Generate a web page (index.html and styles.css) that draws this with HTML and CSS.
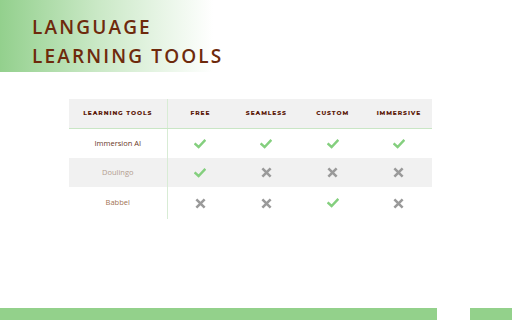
FILE: index.html
```html
<!DOCTYPE html>
<html>
<head>
<meta charset="utf-8">
<link rel="stylesheet" href="styles.css">
</head>
<body>
<div class="slide">
  <header class="title-box">
    <h1 class="title">LANGUAGE<br>LEARNING TOOLS</h1>
  </header>
  <main class="content">
    <table class="grid">
      <thead>
        <tr>
          <th class="first">LEARNING TOOLS</th>
          <th>FREE</th>
          <th>SEAMLESS</th>
          <th>CUSTOM</th>
          <th>IMMERSIVE</th>
        </tr>
      </thead>
      <tbody>
        <tr>
          <td class="first name-a">Immersion AI</td>
          <td><svg class="ok" viewBox="0 0 12 10"><path d="M1.5 5.2 L4.6 8 L10.5 1.8"/></svg></td>
          <td><svg class="ok" viewBox="0 0 12 10"><path d="M1.5 5.2 L4.6 8 L10.5 1.8"/></svg></td>
          <td><svg class="ok" viewBox="0 0 12 10"><path d="M1.5 5.2 L4.6 8 L10.5 1.8"/></svg></td>
          <td><svg class="ok" viewBox="0 0 12 10"><path d="M1.5 5.2 L4.6 8 L10.5 1.8"/></svg></td>
        </tr>
        <tr class="alt">
          <td class="first name-b">Doulingo</td>
          <td><svg class="ok" viewBox="0 0 12 10"><path d="M1.5 5.2 L4.6 8 L10.5 1.8"/></svg></td>
          <td><svg class="no" viewBox="0 0 12 12"><path d="M1.5 1.5 L10.5 10.5 M10.5 1.5 L1.5 10.5"/></svg></td>
          <td><svg class="no" viewBox="0 0 12 12"><path d="M1.5 1.5 L10.5 10.5 M10.5 1.5 L1.5 10.5"/></svg></td>
          <td><svg class="no" viewBox="0 0 12 12"><path d="M1.5 1.5 L10.5 10.5 M10.5 1.5 L1.5 10.5"/></svg></td>
        </tr>
        <tr>
          <td class="first name-c">Babbel</td>
          <td><svg class="no" viewBox="0 0 12 12"><path d="M1.5 1.5 L10.5 10.5 M10.5 1.5 L1.5 10.5"/></svg></td>
          <td><svg class="no" viewBox="0 0 12 12"><path d="M1.5 1.5 L10.5 10.5 M10.5 1.5 L1.5 10.5"/></svg></td>
          <td><svg class="ok" viewBox="0 0 12 10"><path d="M1.5 5.2 L4.6 8 L10.5 1.8"/></svg></td>
          <td><svg class="no" viewBox="0 0 12 12"><path d="M1.5 1.5 L10.5 10.5 M10.5 1.5 L1.5 10.5"/></svg></td>
        </tr>
      </tbody>
    </table>
  </main>
  <footer class="bottom">
    <div class="bar-long"></div>
    <div class="bar-gap"></div>
    <div class="bar-short"></div>
  </footer>
</div>
</body>
</html>
```
FILE: styles.css
```css
* { box-sizing: border-box; }
html, body { margin: 0; padding: 0; background: #fff; }
.slide {
  width: 512px;
  height: 320px;
  display: flex;
  flex-direction: column;
  overflow: hidden;
  font-family: "Open Sans", "Liberation Sans", sans-serif;
}
.title-box {
  width: 213px;
  height: 72px;
  background: linear-gradient(to right, #93d08d 0%, #c9e8c5 45%, #ffffff 100%);
  padding: 13px 0 0 32px;
}
.title {
  margin: 0;
  font-family: "Open Sans", "Liberation Sans", sans-serif;
  font-weight: 600;
  font-size: 19px;
  line-height: 29px;
  letter-spacing: 2.15px;
  color: #6e2a0c;
  white-space: nowrap;
}
.content {
  flex: 1;
  padding: 27px 0 0 69px;
}
.grid {
  border-collapse: collapse;
  width: 363px;
  table-layout: fixed;
}
.grid th {
  height: 29px;
  background: #f1f1f1;
  border-bottom: 1px solid #c9e6c5;
  font-family: "Montserrat", "Open Sans", "Liberation Sans", sans-serif;
  font-weight: 800;
  font-size: 6px;
  letter-spacing: 0.9px;
  color: #5c1a0a;
  text-align: center;
  padding: 0;
  width: 66.25px;
}
.grid th.first { width: 98px; }
.grid .first { border-right: 1px solid #d8ecd5; }
.grid td {
  height: 29.5px;
  text-align: center;
  vertical-align: middle;
  padding: 0;
  font-size: 7.5px;
}
.grid tbody tr:last-child td { height: 32px; vertical-align: top; padding-top: 10px; }
.grid tr.alt td { background: #f1f1f1; }
.name-a { color: #6a3826; }
.name-b { color: #b39d90; }
.name-c { color: #a17352; }
svg { display: inline-block; vertical-align: middle; }
.ok { width: 12px; height: 10px; }
.ok path { fill: none; stroke: #84cf7e; stroke-width: 2.4; stroke-linecap: square; }
.no { width: 11px; height: 11px; }
.no path { fill: none; stroke: #9a9a9a; stroke-width: 2.8; }
.bottom {
  height: 12px;
  display: flex;
}
.bar-long { width: 437px; background: #93d18b; }
.bar-gap { width: 33px; }
.bar-short { flex: 1; background: #93d18b; }
```
